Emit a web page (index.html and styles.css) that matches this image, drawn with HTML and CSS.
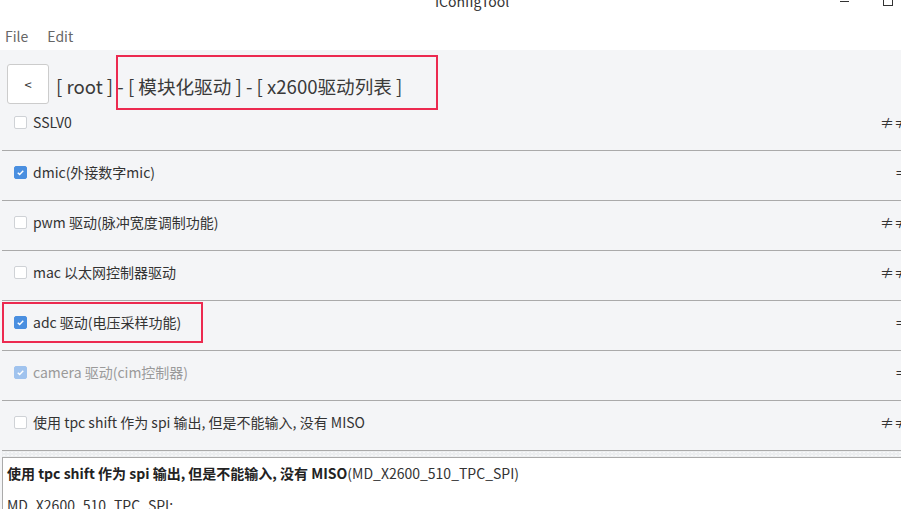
FILE: index.html
```html
<!DOCTYPE html>
<html lang="zh-CN">
<head>
  <meta charset="UTF-8">
  <meta name="viewport" content="width=device-width, initial-scale=1.0">
  <title>IConfigTool</title>
  <link rel="stylesheet" href="styles.css">
</head>
<body>
  <div class="titlebar">
    <span class="title">IConfigTool</span>
    <span class="spacer"></span>
    <span class="win-min"></span>
    <span class="win-max"></span>
  </div>
  <div class="menubar">
    <span>File</span>
    <span>Edit</span>
  </div>

  <div class="main">
    <div class="header">
      <button class="back">&lt;</button>
      <div class="crumbs">[ root ] - [ 模块化驱动 ] - [ x2600驱动列表 ]</div>
      <!-- annotation box -->
      <div class="note note-crumbs"></div>
    </div>

    <div class="list">
      <div class="row first">
        <span class="cb"></span>
        <span class="label">SSLV0</span>
        <span class="mark">≠≠</span>
      </div>
      <div class="row">
        <span class="cb checked"><svg viewBox="0 0 14 14"><path d="M3.5 7.2l2.4 2.3 4.6-4.8" fill="none" stroke="#fff" stroke-width="1.8"/></svg></span>
        <span class="label">dmic(外接数字mic)</span>
        <span class="mark eq">=</span>
      </div>
      <div class="row">
        <span class="cb"></span>
        <span class="label">pwm 驱动(脉冲宽度调制功能)</span>
        <span class="mark">≠≠</span>
      </div>
      <div class="row">
        <span class="cb"></span>
        <span class="label">mac 以太网控制器驱动</span>
        <span class="mark">≠≠</span>
      </div>
      <div class="row">
        <span class="cb checked"><svg viewBox="0 0 14 14"><path d="M3.5 7.2l2.4 2.3 4.6-4.8" fill="none" stroke="#fff" stroke-width="1.8"/></svg></span>
        <span class="label">adc 驱动(电压采样功能)</span>
        <span class="mark eq">=</span>
        <div class="note note-adc"></div>
      </div>
      <div class="row disabled">
        <span class="cb checked"><svg viewBox="0 0 14 14"><path d="M3.5 7.2l2.4 2.3 4.6-4.8" fill="none" stroke="#fff" stroke-width="1.8"/></svg></span>
        <span class="label">camera 驱动(cim控制器)</span>
        <span class="mark eq">=</span>
      </div>
      <div class="row">
        <span class="cb"></span>
        <span class="label">使用 tpc shift 作为 spi 输出, 但是不能输入, 没有 MISO</span>
        <span class="mark">≠≠</span>
      </div>
    </div>

    <div class="splitter"></div>

    <div class="detail">
      <p><b>使用 tpc shift 作为 spi 输出, 但是不能输入, 没有 MISO</b>(MD_X2600_510_TPC_SPI)</p>
      <p>MD_X2600_510_TPC_SPI:</p>
    </div>
  </div>
</body>
</html>
```

FILE: styles.css
```css
html, body {
  margin: 0;
  padding: 0;
  height: 100%;
  overflow: hidden;
}
body {
  font-family: "Noto Sans CJK SC", "Noto Sans", sans-serif;
  font-size: 14px;
  color: #333;
  background-color: #fff;
}

/* window chrome */
.titlebar {
  height: 20px;
  display: flex;
  align-items: flex-start;
  padding-left: 435px;
  padding-right: 8px;
  overflow: hidden;
}
.title {
  line-height: 20px;
  margin-top: -9px;
  color: #333;
}
.spacer {
  flex: 1;
}
.win-min {
  width: 9px;
  height: 1px;
  margin-top: 1px;
  background-color: #333;
}
.win-max {
  width: 8px;
  height: 8px;
  margin-top: -4px;
  margin-left: 34px;
  border: 1px solid #333;
}

.menubar {
  height: 30px;
  display: flex;
  align-items: center;
  gap: 19px;
  padding: 2px 0 0 5px;
  box-sizing: border-box;
  color: #666;
}

/* content */
.main {
  background-color: #f4f5f7;
  height: calc(100% - 50px);
  overflow: hidden;
}
.header {
  position: relative;
  height: 60px;
  box-sizing: border-box;
  padding: 14px 0 0 7px;
  display: flex;
  align-items: flex-start;
}
.back {
  width: 42px;
  height: 40px;
  padding: 0;
  background-color: #fff;
  border: 1px solid #ccc;
  border-radius: 3px;
  font-family: inherit;
  font-size: 13px;
  color: #333;
}
.crumbs {
  margin: 2px 0 0 7px;
  line-height: 40px;
  font-size: 18.6px;
  color: #3a3a3a;
}
.note {
  position: absolute;
  box-sizing: border-box;
  border: 2px solid #ec2a50;
}
.note-crumbs {
  left: 116px;
  top: 5px;
  width: 322px;
  height: 55px;
}
.note-adc {
  left: 0;
  top: 1px;
  width: 201px;
  height: 41px;
}

.list {
  margin-left: 2px;
}
.row {
  position: relative;
  height: 50px;
  box-sizing: border-box;
  padding: 11px 0 0 12px;
  border-bottom: 1px solid #aaa;
  display: flex;
  align-items: flex-start;
  line-height: 20px;
}
.row.first {
  height: 41px;
  padding-top: 2px;
}
.cb {
  width: 13px;
  height: 13px;
  margin-top: 4px;
  box-sizing: border-box;
  border: 1px solid #cfd2d6;
  border-radius: 2px;
  background-color: #fff;
  flex-shrink: 0;
}
.cb svg {
  display: block;
  width: 100%;
  height: 100%;
}
.cb.checked {
  background-color: #4a8fe0;
  border-color: #4a8fe0;
}
.label {
  flex: 1;
  margin-left: 6px;
  white-space: nowrap;
}
.mark {
  width: 21px;
  white-space: nowrap;
  overflow: visible;
}
.mark.eq {
  box-sizing: border-box;
  padding-left: 16px;
}
.disabled .label {
  color: #9a9a9a;
}
.disabled .cb.checked {
  background-color: #a0c3ee;
  border-color: #a0c3ee;
}

.splitter {
  height: 6px;
  margin-left: 2px;
  background-color: #eceef0;
  background-image: radial-gradient(#f8f9fa 1px, transparent 1px);
  background-size: 4px 3px;
}
.detail {
  margin-left: 2px;
  height: 100%;
  background-color: #fff;
  border-top: 1px solid #aaa;
  border-left: 1px solid #aaa;
  padding: 5px 4px;
  line-height: 20px;
}
.detail p {
  margin: 0 0 12px 0;
}
.detail b {
  font-weight: bold;
  color: #222;
}
```
